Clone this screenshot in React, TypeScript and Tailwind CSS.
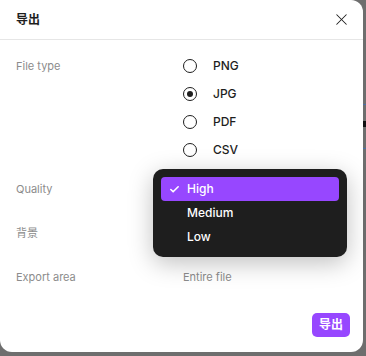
import { Check, X } from 'lucide-react';

const fileTypes = ['PNG', 'JPG', 'PDF', 'CSV'];
const qualities = ['High', 'Medium', 'Low'];

function Radio({ checked }: { checked: boolean }) {
  return (
    <div className="w-[14px] h-[14px] rounded-full border-[1.5px] border-[#1e1e1e] flex items-center justify-center">
      {checked && <div className="w-[6px] h-[6px] rounded-full bg-[#1e1e1e]" />}
    </div>
  );
}

export default function App() {
  return (
    <main className="w-[366px] h-[356px] bg-[#6e6e6e] flex font-['Inter','Noto_Sans_CJK_SC',sans-serif] overflow-hidden">
      <div className="relative w-[363px] h-[352px] bg-white rounded-tr-[12px] rounded-b-[12px] flex flex-col shrink-0">
        <div className="h-[40px] flex items-center justify-between pl-4 pr-[12px] border-b border-[#e6e6e6]">
          <h1 className="text-[12px] font-bold text-[#1e1e1e]">导出</h1>
          <X size={19} strokeWidth={1.3} className="text-[#1e1e1e]" />
        </div>

        <div className="flex flex-col px-4 pt-[12px] text-[11px]">
          <div className="grid grid-cols-[167px_1fr]">
            <p className="h-[28px] leading-[28px] text-[#8c8c8c]">File type</p>
            <div className="flex flex-col">
              {fileTypes.map((t) => (
                <div key={t} className="h-[28px] flex items-center gap-[16px]">
                  <Radio checked={t === 'JPG'} />
                  <span className="text-[12px] font-medium text-[#1e1e1e]">{t}</span>
                </div>
              ))}
            </div>
          </div>

          <div className="grid grid-cols-[167px_1fr] mt-[11px]">
            <p className="h-[28px] leading-[28px] text-[#8c8c8c]">Quality</p>
            <div className="relative h-[28px]">
              <div className="absolute left-[-30px] top-[-6px] w-[194px] bg-[#1e1e1e] rounded-[10px] p-[8px] shadow-[0_6px_24px_rgba(0,0,0,0.25)] z-10">
                {qualities.map((q) => (
                  <div
                    key={q}
                    className={
                      q === 'High'
                        ? 'h-[24px] flex items-center rounded-[4px] bg-[#9747ff] text-white'
                        : 'h-[24px] flex items-center text-white'
                    }
                  >
                    <span className="w-[26px] flex justify-center">
                      {q === 'High' && <Check size={11} strokeWidth={3.5} />}
                    </span>
                    <span className="text-[12px] font-medium">{q}</span>
                  </div>
                ))}
              </div>
            </div>
          </div>

          <div className="grid grid-cols-[167px_1fr] mt-4">
            <p className="h-[28px] leading-[28px] text-[#8c8c8c]">背景</p>
            <div className="h-[28px]" />
          </div>

          <div className="grid grid-cols-[167px_1fr] mt-4">
            <p className="h-[28px] leading-[28px] text-[#8c8c8c]">Export area</p>
            <p className="h-[28px] leading-[28px] text-[#8c8c8c]">Entire file</p>
          </div>
        </div>

        <div className="mt-auto flex justify-end pr-[13px] pb-[15px]">
          <button className="h-[24px] w-[38px] rounded-[5px] bg-[#9747ff] text-white text-[12px] font-bold">
            导出
          </button>
        </div>
      </div>
      <div className="flex-1 flex flex-col">
        <div className="h-[104px]" />
        <div className="h-px bg-[#4a6fa5]" />
        <div className="h-[16px]" />
        <div className="h-[6px] bg-[#111]" />
        <div className="h-[21px]" />
        <div className="h-px bg-[#4a6fa5]" />
      </div>
    </main>
  );
}
